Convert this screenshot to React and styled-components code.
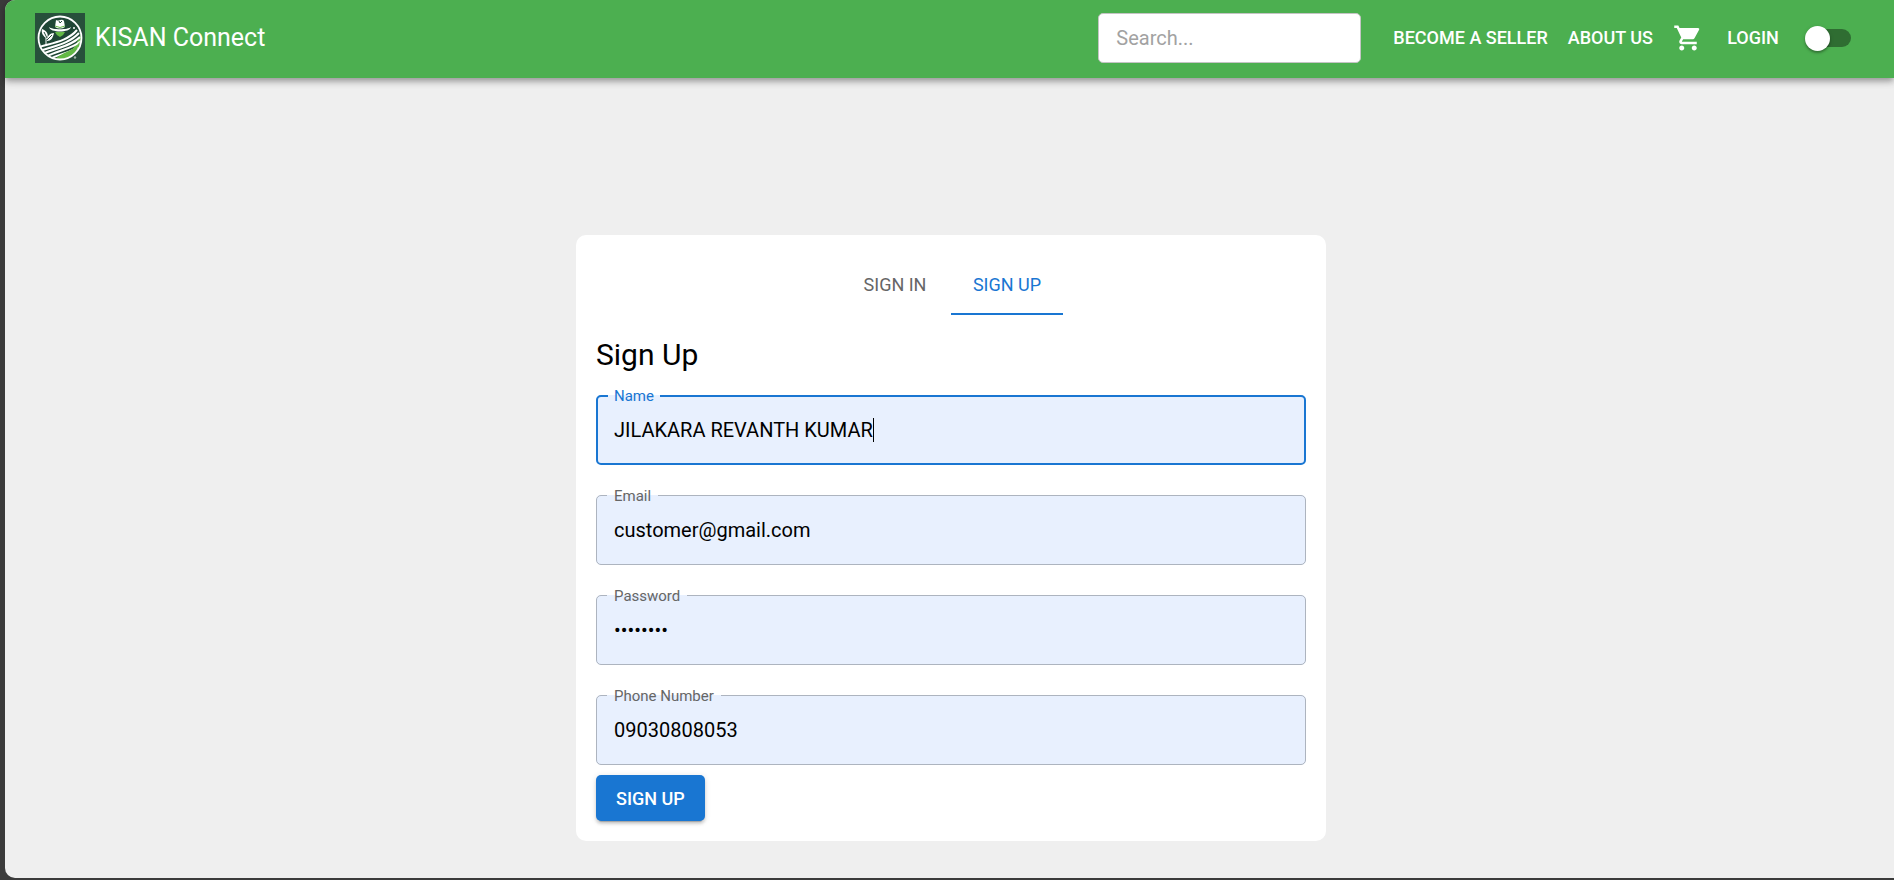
import React, { useEffect, useRef, useState } from "react";
import styled, { createGlobalStyle } from "styled-components";
import { MdShoppingCart } from "react-icons/md";

const GlobalStyle = createGlobalStyle`
  *, *::before, *::after { box-sizing: border-box; }
  body {
    margin: 0;
    background: #3b3b3b;
    font-family: Roboto, "Liberation Sans", sans-serif;
    color: #000;
  }
  button, input { font-family: inherit; }
`;

const Frame = styled.div`
  display: flex;
  flex-direction: column;
  min-height: calc(100vh - 2px);
  margin: 0 0 2px 5px;
  background: #efefef;
  border-radius: 10px 0 0 10px;
`;

const Header = styled.header`
  display: flex;
  align-items: center;
  height: 78px;
  padding: 0 28px 2px 30px;
  background: #4caf50;
  color: #fff;
  border-top-left-radius: 10px;
  box-shadow: 0 3px 5px -1px rgba(0, 0, 0, 0.2), 0 5px 6px rgba(0, 0, 0, 0.14),
    0 1px 12px rgba(0, 0, 0, 0.12);
`;

const Brand = styled.a`
  display: flex;
  align-items: center;
  gap: 10px;
  margin-right: auto;
  color: inherit;
  font-size: 25px;
  font-weight: 400;
  line-height: 42px;
  text-decoration: none;
`;

const SearchInput = styled.input`
  width: 263px;
  height: 50px;
  margin-right: 22px;
  padding: 0 17px;
  border: 1px solid #c4c4c4;
  border-radius: 5px;
  background: #fff;
  font-size: 20px;
  outline: none;
  &::placeholder { color: #a2a2a2; opacity: 1; }
`;

const Nav = styled.nav`
  display: flex;
  align-items: center;
`;

const NavLink = styled.a`
  min-width: 80px;
  padding: 0 10px;
  color: inherit;
  font-size: 18px;
  font-weight: 500;
  line-height: 40px;
  text-align: center;
  text-decoration: none;
  text-transform: uppercase;
`;

const IconButton = styled.button`
  display: flex;
  padding: 10px;
  border: 0;
  background: none;
  color: inherit;
  cursor: pointer;
`;

const Switch = styled.input`
  appearance: none;
  display: flex;
  align-items: center;
  width: 43px;
  height: 18px;
  margin: 0 15px;
  border-radius: 9px;
  background: #2f6d32;
  cursor: pointer;
  &::before {
    content: "";
    width: 25px;
    height: 25px;
    margin-left: -3px;
    border-radius: 50%;
    background: #fff;
    box-shadow: 0 2px 2px rgba(0, 0, 0, 0.25), 0 1px 4px rgba(0, 0, 0, 0.15);
  }
  &:checked::before { margin-left: 21px; }
`;

const Main = styled.main`
  display: flex;
  justify-content: center;
  padding: 157px 0 37px 3px;
`;

const Card = styled.section`
  width: 100%;
  max-width: 750px;
  padding: 20px;
  border-radius: 10px;
  background: #fff;
`;

const Tabs = styled.div`
  display: flex;
  justify-content: center;
`;

const Tab = styled.button`
  width: 112px;
  height: 60px;
  padding: 0;
  border: 0;
  border-bottom: 2px solid ${(p) => (p.$active ? "#1976d2" : "transparent")};
  background: none;
  color: ${(p) => (p.$active ? "#1976d2" : "#666")};
  font-size: 18px;
  text-transform: uppercase;
  cursor: pointer;
`;

const Title = styled.h1`
  margin: 20px 0;
  font-size: 30px;
  font-weight: 400;
  line-height: 40px;
`;

const Form = styled.form`
  display: flex;
  flex-direction: column;
  align-items: flex-start;
`;

const Field = styled.fieldset`
  width: 100%;
  height: 70px;
  min-width: 0;
  margin: 0 0 30px;
  padding: 0 10px;
  border: ${(p) => (p.$active ? "2px solid #1976d2" : "1px solid #adb4bf")};
  border-radius: 5px;
  background: #e8f0fe;
  &:last-of-type { margin-bottom: 10px; }
`;

const Legend = styled.legend`
  display: flex;
  align-items: center;
  height: 0;
  padding: 0 ${(p) => (p.$active ? "6px" : "7px")};
  color: ${(p) => (p.$active ? "#1976d2" : "#666")};
  font-size: 15px;
  line-height: 20px;
`;

const Control = styled.div`
  position: relative;
  display: flex;
  align-items: center;
  height: ${(p) => (p.$active ? "66px" : "68px")};
  padding: 0 ${(p) => (p.$active ? "6px" : "7px")};
  font-size: 20px;
`;

const FieldInput = styled.input`
  width: 100%;
  height: 100%;
  padding: 0;
  border: 0;
  background: none;
  color: #000;
  font-size: 20px;
  caret-color: transparent;
  outline: none;
`;

const Caret = styled.span`
  position: absolute;
  left: ${(p) => p.$x}px;
  width: 1px;
  height: 24px;
  background: #000;
  pointer-events: none;
`;

const SubmitButton = styled.button`
  height: 46px;
  padding: 0 20px;
  border: 0;
  border-radius: 5px;
  background: #1976d2;
  color: #fff;
  font-size: 18px;
  font-weight: 500;
  text-transform: uppercase;
  box-shadow: 0 4px 1px -3px rgba(0, 0, 0, 0.2), 0 3px 3px rgba(0, 0, 0, 0.14),
    0 1px 6px rgba(0, 0, 0, 0.12);
  cursor: pointer;
`;

function Logo() {
  return (
    <svg width="50" height="50" viewBox="0 0 50 50" aria-hidden="true">
      <defs>
        <clipPath id="disc"><circle cx="25" cy="25" r="21" /></clipPath>
      </defs>
      <rect width="50" height="50" fill="#27503b" />
      <circle cx="25" cy="25" r="21.5" fill="#1f4635" />
      <g clipPath="url(#disc)">
        <path d="M20 47C34 45 40 34 46 21V48H22Z" fill="#62b845" />
        <g fill="none" stroke="#fff" strokeWidth="2">
          <path d="M4 34C17 30 33 28 42 17" />
          <path d="M5 38C18 33 34 31 44 20" />
          <path d="M8 41C20 35 35 34 45 24" />
          <path d="M11 44C22 37 36 37 46 28" />
          <path d="M15 46C23 41 36 40 43 34" />
        </g>
        <path d="M20 46C31 37 40 38 45 28C43 37 39 42 29 46Z" fill="#62b845" />
      </g>
      <path d="M20 19H30Q29 22 25 24Q21 22 20 19Z" fill="#62b845" />
      <path d="M14 14C17 17 33 17 36 14C35 20 15 20 14 14Z" fill="#fff" />
      <path d="M20 14L21 7Q23 8 25 7Q28 6 29 8L30 14Q25 17 20 14Z" fill="#fff" />
      <path d="M20 13Q25 16 30 13" fill="none" stroke="#62b845" strokeWidth="1" />
      <path d="M24 8L25 10L27 8" fill="none" stroke="#27503b" strokeWidth="1" />
      <path d="M7 16C12 18 14 21 12 26C8 23 6 20 7 16ZM12 28C12 23 15 20 19 20C18 25 16 28 12 28Z" fill="#fff" />
      <path d="M9 19L12 25M17 22L12 27" stroke="#27503b" strokeWidth="1" />
      <path d="M11 25V33" stroke="#fff" strokeWidth="1" />
      <circle cx="39" cy="15" r="1" fill="#fff" />
      <circle cx="25" cy="25" r="21.5" fill="none" stroke="#fff" strokeWidth="1.8" />
      <circle cx="40" cy="44.5" r="1.2" fill="#9bb3a4" />
    </svg>
  );
}

const FIELDS = [
  { id: "name", label: "Name", type: "text", value: "JILAKARA REVANTH KUMAR" },
  { id: "email", label: "Email", type: "text", value: "customer@gmail.com" },
  { id: "password", label: "Password", type: "password", value: "customer" },
  { id: "phone", label: "Phone Number", type: "tel", value: "09030808053" },
];

// Width of the typed text, used to put the caret after its last character.
function textWidth(input) {
  const context = document.createElement("canvas").getContext("2d");
  const { fontSize, fontFamily } = getComputedStyle(input);
  context.font = `${fontSize} ${fontFamily}`;
  const shown = input.type === "password" ? "•".repeat(input.value.length) : input.value;
  return Math.round(context.measureText(shown).width);
}

function TextField({ field, active, onActivate }) {
  const ref = useRef(null);
  const [caret, setCaret] = useState(0);

  useEffect(() => {
    if (active) {
      ref.current.focus();
      setCaret(ref.current.offsetLeft + textWidth(ref.current));
    }
  }, [active]);

  return (
    <Field $active={active}>
      <Legend $active={active}>
        <label htmlFor={field.id}>{field.label}</label>
      </Legend>
      <Control $active={active}>
        <FieldInput
          id={field.id}
          ref={ref}
          type={field.type}
          defaultValue={field.value}
          onFocus={onActivate}
          onChange={(e) => setCaret(e.target.offsetLeft + textWidth(e.target))}
        />
        {active && <Caret $x={caret} />}
      </Control>
    </Field>
  );
}

export default function App() {
  const [active, setActive] = useState("name");

  return (
    <>
      <GlobalStyle />
      <Frame>
        <Header>
          <Brand href="#home">
            <Logo />
            KISAN Connect
          </Brand>
          <SearchInput type="search" aria-label="Search" placeholder="Search..." />
          <Nav>
            <NavLink href="#seller">Become a seller</NavLink>
            <NavLink href="#about">About us</NavLink>
            <IconButton type="button" aria-label="Cart">
              <MdShoppingCart size={30} />
            </IconButton>
            <NavLink href="#login">Login</NavLink>
            <Switch type="checkbox" role="switch" aria-label="Dark mode" />
          </Nav>
        </Header>
        <Main>
          <Card>
            <Tabs role="tablist">
              <Tab type="button" role="tab" aria-selected="false">Sign in</Tab>
              <Tab type="button" role="tab" aria-selected="true" $active>Sign up</Tab>
            </Tabs>
            <Title>Sign Up</Title>
            <Form onSubmit={(e) => e.preventDefault()}>
              {FIELDS.map((f) => (
                <TextField
                  key={f.id}
                  field={f}
                  active={active === f.id}
                  onActivate={() => setActive(f.id)}
                />
              ))}
              <SubmitButton type="submit">Sign up</SubmitButton>
            </Form>
          </Card>
        </Main>
      </Frame>
    </>
  );
}
